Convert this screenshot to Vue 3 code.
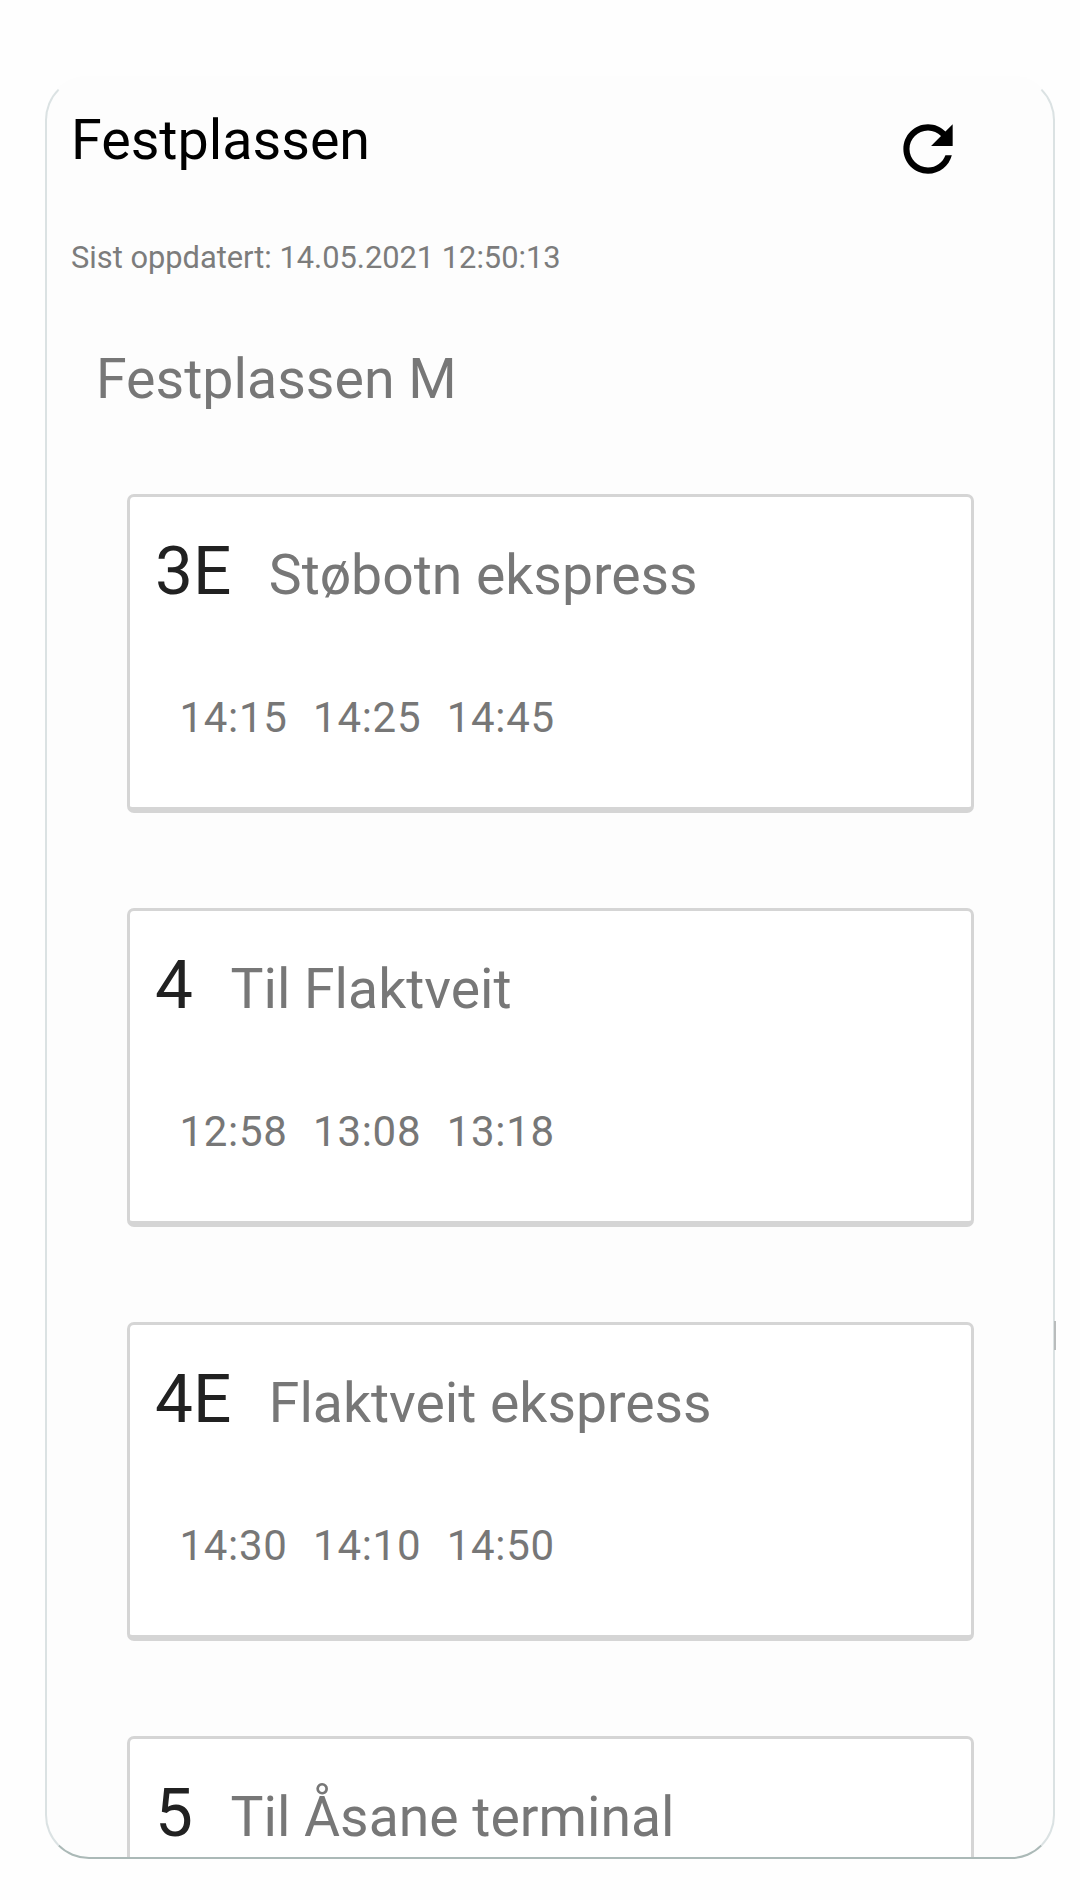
<script setup>
const departures = [
  { line: '3E', name: 'Støbotn ekspress', times: ['14:15', '14:25', '14:45'] },
  { line: '4', name: 'Til Flaktveit', times: ['12:58', '13:08', '13:18'] },
  { line: '4E', name: 'Flaktveit ekspress', times: ['14:30', '14:10', '14:50'] },
  { line: '5', name: 'Til Åsane terminal', times: [] },
]
</script>

<template>
  <main class="screen">
    <section class="panel">
      <header class="header">
        <h1 class="title">Festplassen</h1>
        <button class="refresh" aria-label="Oppdater">
          <svg viewBox="0 0 24 24" width="74" height="74">
            <path d="M17.65 6.35C16.2 4.9 14.21 4 12 4c-4.42 0-7.99 3.58-7.99 8s3.57 8 7.99 8c3.73 0 6.84-2.55 7.73-6h-2.08c-.82 2.33-3.04 4-5.65 4-3.31 0-6-2.69-6-6s2.69-6 6-6c1.66 0 3.14.69 4.22 1.78L13 11h7V4l-2.35 2.35z" />
          </svg>
        </button>
      </header>
      <p class="updated">Sist oppdatert: 14.05.2021 12:50:13</p>
      <h2 class="platform">Festplassen M</h2>
      <ul class="list">
        <li v-for="d in departures" :key="d.line" class="card">
          <div class="route">
            <span class="line">{{ d.line }}</span>
            <span class="name">{{ d.name }}</span>
          </div>
          <div class="times">
            <span v-for="t in d.times" :key="t" class="time">{{ t }}</span>
          </div>
        </li>
      </ul>
    </section>
    <i class="thumb"></i>
  </main>
</template>

<style>
body {
  background: #fefefe;
}
</style>

<style scoped>
.screen {
  position: relative;
  box-sizing: border-box;
  width: 1080px;
  height: 1900px;
  padding: 76px 25px 41px 45px;
  overflow: hidden;
  font-family: Roboto, "Liberation Sans", sans-serif;
  color: #777;
}
.panel {
  box-sizing: border-box;
  height: 1783px;
  overflow: hidden;
  border: 2px solid #dbe2e3;
  border-top-color: transparent;
  border-bottom-color: #abb9b7;
  border-radius: 44px;
  background: #fdfdfd;
}
.header {
  display: flex;
  justify-content: space-between;
  height: 129px;
  padding: 0 88px 0 24px;
}
.title {
  margin: 29px 0 0;
  font-size: 55.6px;
  line-height: 66px;
  font-weight: 400;
  color: #000;
}
.refresh {
  width: 74px;
  height: 74px;
  margin: 33.5px 0 0;
  padding: 0;
  border: 0;
  background: none;
}
.refresh svg {
  display: block;
  fill: #000;
}
.updated {
  margin: 33px 0 0 24px;
  font-size: 30.8px;
  line-height: 36px;
  white-space: nowrap;
  color: #7c7c7c;
}
.platform {
  margin: 71px 0 0 49px;
  font-size: 55.5px;
  line-height: 66px;
  font-weight: 400;
}
.list {
  display: flex;
  flex-direction: column;
  gap: 95px;
  margin: 81px 79px 0 80px;
  padding: 0;
  list-style: none;
}
.card {
  box-sizing: border-box;
  flex: none;
  height: 319px;
  padding: 34px 25px 0;
  border: 3px solid #d5d5d5;
  border-bottom-width: 6px;
  border-radius: 7px;
  background: #fff;
}
.route {
  display: flex;
  align-items: baseline;
  gap: 37.5px;
  height: 80px;
  line-height: 80px;
  white-space: nowrap;
}
.line {
  font-size: 67.5px;
  color: #212121;
}
.name {
  font-size: 55.3px;
}
.times {
  display: flex;
  gap: 25.5px;
  margin: 82px 0 0 24.5px;
  font-size: 42px;
  line-height: 50px;
}
.time {
  letter-spacing: 0.7px;
}
.thumb {
  position: absolute;
  top: 1321px;
  left: 1054px;
  width: 2px;
  height: 29px;
  background: #b9bcbc;
}
</style>
